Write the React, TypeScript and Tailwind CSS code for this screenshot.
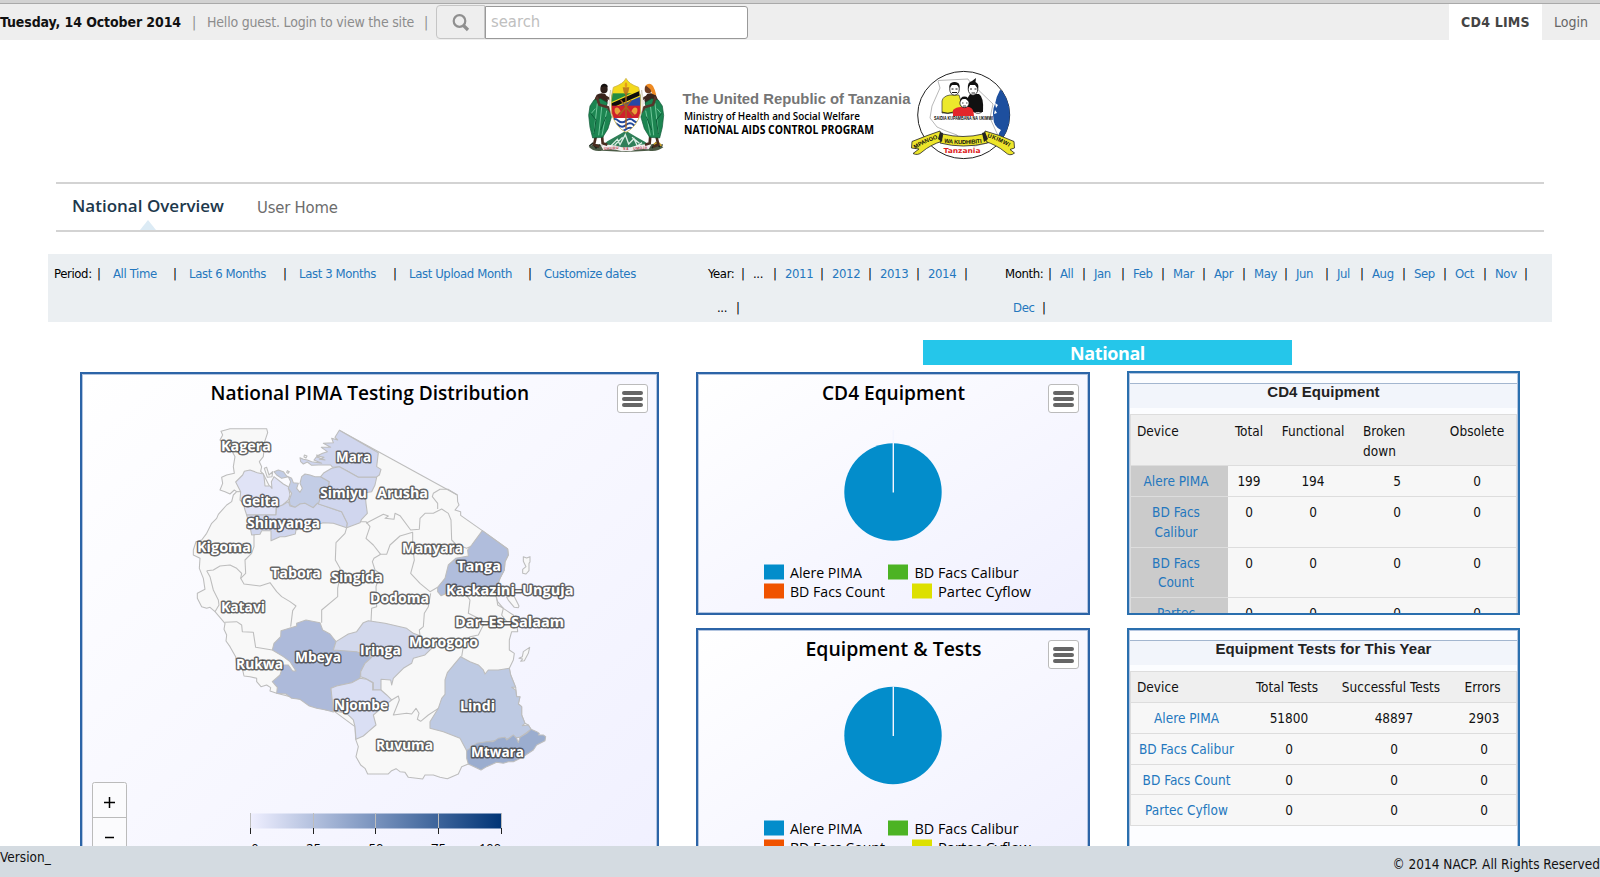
import React from 'react';

const LINK = 'text-[#2477be]';

type Label = { t: string; x: number; y: number; w: number };

const labels: Label[] = [
  { t: 'Kagera', x: 221, y: 451, w: 50 },
  { t: 'Mara', x: 336, y: 462, w: 35 },
  { t: 'Geita', x: 242, y: 506, w: 37 },
  { t: 'Simiyu', x: 320, y: 498, w: 47 },
  { t: 'Arusha', x: 377, y: 498, w: 51 },
  { t: 'Shinyanga', x: 247, y: 528, w: 73 },
  { t: 'Kigoma', x: 197, y: 552, w: 54 },
  { t: 'Tabora', x: 271, y: 578, w: 50 },
  { t: 'Singida', x: 331, y: 582, w: 52 },
  { t: 'Katavi', x: 221, y: 612, w: 44 },
  { t: 'Manyara', x: 402, y: 553, w: 61 },
  { t: 'Tanga', x: 457, y: 571, w: 44 },
  { t: 'Kaskazini–Unguja', x: 446, y: 594.5, w: 127.5 },
  { t: 'Dodoma', x: 370, y: 603, w: 59 },
  { t: 'Dar–Es–Salaam', x: 455, y: 627, w: 109 },
  { t: 'Morogoro', x: 409, y: 647, w: 69 },
  { t: 'Iringa', x: 360, y: 655, w: 41 },
  { t: 'Mbeya', x: 295, y: 662, w: 46 },
  { t: 'Rukwa', x: 236, y: 669, w: 47 },
  { t: 'Njombe', x: 334, y: 710, w: 54 },
  { t: 'Lindi', x: 460, y: 711, w: 35 },
  { t: 'Ruvuma', x: 376, y: 750, w: 57 },
  { t: 'Mtwara', x: 471, y: 757, w: 53 },
];

const country =
  'M453 214L480 206H590L593 218L584 245L580 290L568 305L575 320L572 334L580 342L600 382L640 372L665 400L750 400L752 350L785 325L808 300V211L1162 405L1163 425L1167 435L1155 450L1172 455V466L1237 512L1313 567L1315 585L1305 605L1303 630L1290 655L1280 680L1278 710L1283 725L1300 745L1310 752L1330 765L1342 805L1343 815H1325L1318 840V870L1333 880L1330 900L1318 925L1322 945L1337 982L1340 1010L1350 1010L1345 1032L1355 1040V1065L1365 1090L1375 1095L1383 1108L1195 1212L1175 1220L1165 1242L1132 1256L1110 1252L1090 1245H1065L1058 1257L1015 1252L1005 1237L990 1235L978 1226L965 1232L955 1242H893L885 1225L872 1215L858 1190L865 1160L857 1138L855 1100L790 1052L768 1050L690 1018L620 1000L600 993L602 983L590 975L573 980L560 965V955L540 950L522 948L518 930L500 915L497 890L480 860L468 843L470 825L462 808L465 790L435 755L420 742L410 745L395 740L382 715V700L405 688L400 655L388 625L390 595L370 585V570L378 545L395 540L410 520L425 490L440 475L445 463L470 435L485 425L490 405L500 395L493 390L480 402L465 395L450 390L458 370L455 352L470 345L493 340L490 320L495 290L480 262L465 250L450 240L458 225Z';

const regions: { d: string; f: string }[] = [
  { f: '#e0e3f6', d: 'M497 366L518 345L523 334L540 330L562 338L580 342L582 350L585 378H600L606 385L604 365L612 350L640 372L655 380L660 405L655 420L638 435L618 445V465H530L525 450L520 430L510 420L512 395Z' },
  { f: '#c3cde6', d: 'M612 335L620 345L635 355L655 350L662 365L655 385L665 400L658 420L660 435L675 442L690 432L705 430L715 438L730 443L742 430L752 433L750 410L775 385L778 365L752 350H735L720 345L705 342L695 350L690 370L697 385L690 397L680 385L685 370L670 368L665 355L650 348L640 335L625 330Z' },
  { f: '#d0d6ee', d: 'M530 465H618L620 442L638 435L655 425L660 438L675 442L690 432L705 430L730 443L742 430L775 442L815 455L832 490L830 503L790 490L760 488L720 500L678 510L676 522L645 530L630 530L603 542V512H575L570 523L545 525L540 500Z' },
  { f: '#d0d6ee', d: 'M808 211L925 278L920 320L933 328L928 345L918 352H865L830 332L808 320L788 322L782 315H745L725 316L712 306L700 312L692 305L690 293L700 298L712 300L725 305L755 310L732 300L740 290L765 300L748 298L762 292L742 287L758 280L772 275L754 262L782 262L760 250L790 248L785 235L803 240L795 232Z' },
  { f: '#d0d6ee', d: 'M752 350L762 338L785 325L808 320L830 332L865 352H920L915 375L905 395L885 398L888 430L892 460L875 478L870 488L830 503L832 490L815 455L775 442L745 432L752 410L775 385L778 365Z' },
  { f: '#b0bddc', d: 'M1237 512L1313 567L1315 585L1305 605L1303 630L1290 655L1278 690L1200 700H1130L1113 707L1103 695L1103 682L1125 655L1135 615L1157 595L1195 588L1193 570L1205 555Z' },
  { f: '#adbada', d: 'M607 870L612 850L632 830L633 812L680 798L680 790L708 780L750 788L758 810L780 822L798 845L790 870H860L905 892L885 910L872 935L870 955L845 968L800 978L783 985L785 1005L790 1030V1056L768 1050L740 1045L718 1038L690 1018L665 1015L648 1002L620 1000L622 982L607 965L630 945L640 915H655L668 933H678L660 905L640 890Z' },
  { f: '#d2d8ec', d: 'M798 845L835 822L860 815L880 788L895 782L945 790L1010 805L1030 820L1050 827L1085 865L1065 885L1030 895L1025 910L1000 925L970 955L965 975L962 960L933 958V990H910V968L885 955L872 950V935L885 910L905 892L860 875L790 870Z' },
  { f: '#dadff4', d: 'M783 985L800 978L845 968L870 955L890 958L908 968V990H933L950 1005L965 1020L940 1040L910 1065L918 1095L895 1115L880 1128L858 1138L855 1100L850 1080L830 1060L790 1052L785 1005Z' },
  { f: '#becae3', d: 'M1172 890L1200 905L1225 915L1240 930L1245 942L1255 930H1285L1318 925L1322 945L1337 982H1325L1337 990L1340 1010H1350L1345 1032L1355 1040V1065L1365 1090L1357 1097L1375 1095L1383 1108L1350 1132L1250 1145L1190 1172L1170 1135L1120 1115L1080 1105V1085L1105 1045L1115 1015L1125 1003V960L1132 938L1155 910Z' },
  { f: '#9badcf', d: 'M1383 1108L1400 1115L1408 1120L1405 1125H1420L1427 1130L1425 1142L1400 1155L1390 1170L1360 1190L1330 1205H1315L1300 1210L1280 1207L1250 1220L1233 1230L1195 1212L1190 1195V1172L1220 1150L1250 1145H1270L1285 1135L1305 1132L1310 1140L1330 1125L1340 1135L1345 1148L1350 1132L1370 1120Z' },
];

const borders = [
  'M512 395L500 395',
  'M552 525V560L545 580L525 600L527 640L512 655L522 672L570 678L600 668L620 695L635 710L660 725L678 738L668 752L662 800',
  'M410 632L430 630L450 618L480 615L500 625L515 640L512 655M410 632L420 650L430 690L445 720L447 735L435 755',
  'M465 787L500 785L515 795L517 815L550 817L557 862L607 870',
  'M830 503L825 520L798 548L796 600L810 625L808 660L803 685V710L755 750V788',
  'M870 485H888L900 500L888 535L910 555L932 583H950L960 555L990 528L1028 517L1028 560L1033 600L1022 640L1050 670L1080 695L1103 682',
  'M932 583L912 595L907 605L915 630L930 640L918 680L920 740L905 745L903 785',
  'M888 490L940 463L955 468L945 475L972 478L975 460L990 467L1022 510L1048 508L1050 475L1065 460L1090 460L1115 447L1135 460L1143 480L1145 540L1158 553L1190 565L1200 560',
  'M1103 447V430L1087 410L1090 400L1110 388H1135L1162 405',
  'M1082 700L1075 740L1063 760L1060 800L1048 810L1050 827',
  'M1185 700L1200 720L1195 760L1225 775L1240 795L1225 825L1200 830L1180 860L1175 890',
  'M1278 700L1283 735L1300 745L1295 765L1310 785L1330 800',
  'M965 1020L985 1008L988 1020L970 1065L1010 1060L1025 1062L1038 1045L1047 1060L1042 1078L1052 1084L1075 1065L1105 1045',
];

const islands = [
  'M1360 590L1370 594L1380 590V606L1377 610V632L1368 642L1358 640V628L1368 620L1360 604Z',
  'M1310 712L1325 706L1332 708L1347 738L1345 743L1333 742L1316 722Z',
  'M1347 895L1357 890L1360 875L1379 862L1375 880L1363 902L1352 904L1358 897Z',
  'M583 325L590 322L597 345L608 335L606 350L592 352Z',
  'M703 285L711 288L708 294L702 291Z',
  'M652 332L658 335L654 340L650 337Z',
  'M740 285L748 288L744 293Z',
];

function Fitted({ x, y, w, children, size, weight = 400, font = 'Open Sans', fill = '#000' }: {
  x: number; y: number; w: number; children: string; size: number; weight?: number; font?: string; fill?: string;
}) {
  return (
    <text x={x} y={y} textLength={w} lengthAdjust="spacingAndGlyphs" fontFamily={`"${font}", sans-serif`} fontSize={size} fontWeight={weight} fill={fill}>
      {children}
    </text>
  );
}

function MenuButton() {
  return (
    <button className="flex h-[29px] w-[31px] flex-col items-center justify-center gap-[2px] rounded-[3px] border border-[#bbb] bg-white">
      <i className="h-[4px] w-[21px] rounded-full bg-[#666]" />
      <i className="h-[4px] w-[21px] rounded-full bg-[#666]" />
      <i className="h-[4px] w-[21px] rounded-full bg-[#666]" />
    </button>
  );
}

function MapPanel() {
  return (
    <section className="relative h-[520px] w-[579px] shrink-0 border-2 border-[#2c64a7] bg-gradient-to-br from-white to-[#f0f0ff] shadow-[inset_0_0_0_1px_#b3c5e0]">
      <svg width="575" height="516" viewBox="82 374 575 516" className="block">
        <defs>
          <linearGradient id="scale">
            <stop offset="0" stopColor="#efefff" />
            <stop offset="0.5" stopColor="#7892bd" />
            <stop offset="1" stopColor="#003476" />
          </linearGradient>
        </defs>
        <Fitted x={210.5} y={400} w={318.5} size={19.5} weight={650}>National PIMA Testing Distribution</Fitted>
        <g transform="translate(70 360) scale(.33333)" stroke="#bdbdbd" strokeWidth="3.2" strokeLinejoin="round">
          <path d={country} fill="#f8f8f8" />
          <path d="M583 322L606 385L640 374L665 402L750 400L752 350L785 325L808 320V203L762 225L680 290L600 310L577 330Z" fill="#fbfbff" stroke="none" />
          {borders.map((d) => <path key={d} d={d} fill="none" />)}
          {regions.map((r) => <path key={r.d} d={r.d} fill={r.f} />)}
          {islands.map((d) => <path key={d} d={d} fill="#f8f8f8" />)}
        </g>
        {labels.map((l) => (
          <text key={l.t} x={l.x} y={l.y} textLength={l.w} lengthAdjust="spacingAndGlyphs" fontFamily='"Open Sans", sans-serif' fontSize="14.5" fontWeight="700" fill="#fff" stroke="#3f3f3f" strokeOpacity="0.8" strokeWidth="3" strokeLinejoin="round" paintOrder="stroke">
            {l.t}
          </text>
        ))}
        <rect x="250.5" y="813.5" width="251" height="15" fill="url(#scale)" />
        {[250.5, 313.5, 375.5, 438.5, 501.5].map((x) => (
          <g key={x}>
            <path d={`M${x} 813V828`} stroke="#bdbdbd" />
            <path d={`M${x} 828V834`} stroke="#222" />
          </g>
        ))}
        {[['0', 251.5, 7], ['25', 306, 15], ['50', 368.5, 15], ['75', 431, 15], ['100', 479, 22]].map(([t, x, w]) => (
          <Fitted key={t} x={+x} y={853} w={+w} size={13}>{`${t}`}</Fitted>
        ))}
        <rect x="92.5" y="782.5" width="34" height="70" rx="2" fill="#fbfbfd" stroke="#bbb" />
        <path d="M92 817.5H127" stroke="#bbb" />
        <path d="M104 802.5H115M109.5 797V808M105 837.5H114" stroke="#000" strokeWidth="1.5" />
      </svg>
      <div className="absolute right-[9.5px] top-[10px]"><MenuButton /></div>
    </section>
  );
}

function PiePanel({ title, x, w, cy, tick }: { title: string; x: number; w: number; cy: number; tick?: boolean }) {
  return (
    <section className="relative h-[243px] w-[394px] shrink-0 border-2 border-[#2c64a7] bg-gradient-to-br from-white to-[#f0f0ff] shadow-[inset_0_0_0_1px_#b3c5e0]">
      <svg width="390" height="239" viewBox="698 374 390 239" className="block">
        <Fitted x={x} y={400} w={w} size={19.5} weight={650}>{title}</Fitted>
        <circle cx="893" cy={cy} r="48.7" fill="#038dcb" />
        <path d={`M893.3 ${cy - (tick ? 62 : 49)}V${cy + 0.5}`} stroke="#f4f6ff" strokeWidth="1.4" />
        <rect x="764" y="564.5" width="20" height="15" fill="#038dcb" />
        <rect x="888" y="564.5" width="20" height="15" fill="#4cb324" />
        <rect x="764" y="583.5" width="20" height="15" fill="#f05300" />
        <rect x="912" y="583.5" width="20" height="15" fill="#dde000" />
        <Fitted x={790} y={578} w={72} size={15}>Alere PIMA</Fitted>
        <Fitted x={914.5} y={578} w={104} size={15}>BD Facs Calibur</Fitted>
        <Fitted x={790} y={597} w={95} size={15}>BD Facs Count</Fitted>
        <Fitted x={938} y={597} w={93} size={15}>Partec Cyflow</Fitted>
      </svg>
      <div className="absolute right-[9.5px] top-[10px]"><MenuButton /></div>
    </section>
  );
}

function TablePanel({ title, children }: { title: string; children: React.ReactNode }) {
  return (
    <section className="h-[244px] w-[393px] shrink-0 overflow-hidden border-2 border-[#2a6fae] bg-[#fcfdff] px-px shadow-[inset_0_0_0_1px_#b3c5e0]">
      <h2 className="mt-[10px] h-[25px] whitespace-nowrap border-t border-[#a3b6cf] bg-[#f2f5fb] text-center font-['Liberation_Sans'] text-[15px] font-bold leading-[16px] tracking-[0.05px] text-[#222]">{title}</h2>
      <div className="mt-[6px] border border-[#ddd] bg-[#f7f7f7] text-[13.5px] leading-[19.5px] tracking-[0.02px]">{children}</div>
    </section>
  );
}

const equipment: [string, string, string, string, string][] = [
  ['Alere PIMA', '199', '194', '5', '0'],
  ['BD Facs Calibur', '0', '0', '0', '0'],
  ['BD Facs Count', '0', '0', '0', '0'],
  ['Partec Cyflow', '0', '0', '0', '0'],
];

const tests: [string, string, string, string][] = [
  ['Alere PIMA', '51800', '48897', '2903'],
  ['BD Facs Calibur', '0', '0', '0'],
  ['BD Facs Count', '0', '0', '0'],
  ['Partec Cyflow', '0', '0', '0'],
];

type Slot = [string, string, boolean?];

function Slots({ items }: { items: Slot[] }) {
  return (
    <div className="flex h-[34px] items-center whitespace-nowrap">
      {items.map(([t, w, plain], i) => (
        <span key={i} className={`shrink-0 ${w} ${plain ? 'text-black' : LINK}`}>{t}</span>
      ))}
    </div>
  );
}

const period: Slot[] = [
  ['Period:', 'w-[43px]', true], ['|', 'w-[16px]', true], ['All Time', 'w-[60px]'], ['|', 'w-[16px]', true],
  ['Last 6 Months', 'w-[94px]'], ['|', 'w-[16px]', true], ['Last 3 Months', 'w-[94px]'], ['|', 'w-[16px]', true],
  ['Last Upload Month', 'w-[119px]'], ['|', 'w-[16px]', true], ['Customize dates', 'w-[92px]'],
];
const years: Slot[] = [
  ['Year:', 'w-[33px]', true], ['|', 'w-[12px]', true], ['...', 'w-[20px]', true], ['|', 'w-[12px]', true],
  ['2011', 'w-[35px]'], ['|', 'w-[12px]', true], ['2012', 'w-[36px]'], ['|', 'w-[12px]', true],
  ['2013', 'w-[36px]'], ['|', 'w-[12px]', true], ['2014', 'w-[36px]'], ['|', 'w-[5px]', true],
];
const months: Slot[] = [
  ['Month:', 'w-[43px]', true], ['|', 'w-[12px]', true], ['All', 'w-[22px]'], ['|', 'w-[12px]', true],
  ['Jan', 'w-[27px]'], ['|', 'w-[12px]', true], ['Feb', 'w-[28px]'], ['|', 'w-[12px]', true],
  ['Mar', 'w-[29px]'], ['|', 'w-[12px]', true], ['Apr', 'w-[28px]'], ['|', 'w-[12px]', true],
  ['May', 'w-[30px]'], ['|', 'w-[12px]', true], ['Jun', 'w-[29px]'], ['|', 'w-[12px]', true],
  ['Jul', 'w-[23px]'], ['|', 'w-[12px]', true], ['Aug', 'w-[30px]'], ['|', 'w-[12px]', true],
  ['Sep', 'w-[29px]'], ['|', 'w-[12px]', true], ['Oct', 'w-[28px]'], ['|', 'w-[12px]', true],
  ['Nov', 'w-[29px]'], ['|', 'w-[5px]', true],
];

function Supporter({ scarf }: { scarf?: boolean }) {
  return (
    <g>
      <path d="M78 258L72 284L88 290M96 256L98 280L112 284" fill="none" stroke="#4a2d20" strokeWidth="8" />
      <path d="M80 134Q92 126 106 132L114 150L108 172L78 170L70 156Z" fill="#3a241c" />
      <path d="M72 150L92 146L112 158L108 174L124 184V202L114 236L98 262L68 264L60 232L56 196L60 168Z" fill="#1c8551" stroke="#0e5635" strokeWidth="2" />
      <path d="M82 160L72 250M96 164L86 256M110 182L96 256M64 190L76 176" fill="none" stroke="#6fc79a" strokeWidth="3" />
      <path d="M62 190L78 210L72 252M108 200L92 240" fill="none" stroke="#0d5b38" strokeWidth="3" />
      <path d="M80 140L88 164L114 172L124 188" fill="none" stroke="#54352a" strokeWidth="8" strokeLinejoin="round" />
      <path d="M104 138L124 150" stroke="#3f271d" strokeWidth="7" />
      <ellipse cx="102" cy="117" rx="11" ry="13" fill={scarf ? '#6b3b20' : '#2f201b'} />
      {scarf ? (
        <path d="M110 106Q98 96 88 108Q82 118 78 136L90 132L96 118Z" fill="#ee8a22" />
      ) : (
        <path d="M92 112Q94 100 104 101Q114 103 113 112L104 109Z" fill="#15100f" />
      )}
      <path d="M122 120Q112 160 124 196Q128 206 136 212Q122 180 126 150Z" fill="#faf6ea" stroke="#b9b1a0" strokeWidth="1.5" />
    </g>
  );
}

function CoatOfArms() {
  const shield = 'M168 85Q176 102 206 112Q216 150 211 190Q200 232 168 247Q136 232 125 190Q120 150 130 112Q160 102 168 85Z';
  return (
    <g transform="translate(570 50) scale(.33333)">
      <path d="M84 298L112 274L140 258L168 242L198 260L226 276L252 298Z" fill="#2f7f58" />
      <path d="M120 290L142 268L150 284L166 254L176 282L192 266L202 288L216 278M134 286L158 262M186 262L208 280" fill="none" stroke="#d6ece0" strokeWidth="4" />
      <path d="M56 290Q76 276 96 286L128 292Q168 302 208 292L240 284Q264 276 280 292Q262 306 236 302L168 306L96 302Q70 306 56 290Z" fill="#4b5b46" />
      <path d="M58 288L68 280L78 294L90 284M246 294L258 278L268 290L278 284" fill="none" stroke="#1a241c" strokeWidth="4" />
      <path d="M252 284Q264 270 274 288" fill="none" stroke="#cfa42a" strokeWidth="5" />
      <path d="M92 286Q128 280 156 292H182Q210 280 244 284L236 298Q208 294 182 304H156Q126 294 100 300Z" fill="#f3eeee" />
      <text x="102" y="298" fontSize="11" textLength="44" transform="rotate(-4 124 298)" fill="#b2354a" fontFamily="Liberation Sans" fontWeight="700">UHURU</text>
      <text x="160" y="301" fontSize="9" textLength="15" fill="#b2354a" fontFamily="Liberation Sans" fontWeight="700">NA</text>
      <text x="190" y="298" fontSize="11" textLength="42" transform="rotate(-4 210 298)" fill="#b2354a" fontFamily="Liberation Sans" fontWeight="700">UMOJA</text>
      <Supporter />
      <g transform="translate(337 0) scale(-1 1)"><Supporter scarf /></g>
      <clipPath id="shield"><path d={shield} /></clipPath>
      <g clipPath="url(#shield)">
        <rect x="118" y="80" width="100" height="56" fill="#f3d91c" />
        <rect x="118" y="130" width="100" height="38" fill="#238b43" />
        <path d="M218 126V168H122Z" fill="#2747a6" />
        <path d="M118 170L218 126" stroke="#f3d91c" strokeWidth="20" />
        <path d="M118 170L218 126" stroke="#0d0d0d" strokeWidth="13" />
        <rect x="118" y="167" width="100" height="37" fill="#cf1f2b" />
        <rect x="118" y="204" width="100" height="46" fill="#fff" />
        <path d="M122 212q12-10 23 0t23 0t23 0t23 0M122 225q12-10 23 0t23 0t23 0t23 0M122 238q12-10 23 0t23 0t23 0t23 0" fill="none" stroke="#23499c" strokeWidth="6" />
      </g>
      <path d="M158 112H178L175 126L170 134H166L161 126Z" fill="#c2801f" />
      <path d="M168 96Q176 106 168 113Q160 106 168 96Z" fill="#e59a1c" />
      <path d="M168 128V236M146 198L184 150M190 198L152 150" stroke="#a5621d" strokeWidth="4" />
      <path d="M134 176Q144 166 152 184L142 194Q132 190 134 176ZM202 176Q192 166 184 184L194 194Q204 190 202 176Z" fill="#e8a13a" />
      <path d={shield} fill="none" stroke="#cdb552" strokeWidth="2.5" />
    </g>
  );
}

function Emblem() {
  return (
    <g>
      <clipPath id="disc"><ellipse cx="963.7" cy="115" rx="46" ry="43.6" /></clipPath>
      <ellipse cx="963.7" cy="115" rx="46" ry="43.6" fill="#fff" stroke="#222" strokeWidth="1" />
      <path d="M1000 90L1012 92V142H1000Q996 136 1001 130Q993 126 993.500 118Q992 110 995 104Q996 97 1000 90Z" fill="#1d4f9e" clipPath="url(#disc)" />
      <path d="M995 103l3 2l-2 3zM995 110l2 3l-3 1z" fill="#fff" />
      <path d="M938 81L940 88L936 97L932 106L930 118L937 127L946 131L957 135L962 144L975 146L1000 140L990 118L993 104L970 82L968 79L938 80.5" fill="none" stroke="#999" strokeWidth=".7" />
      <path d="M942 113V101Q943 96 950 95H959L962 105L959 113Z" fill="#ece92c" stroke="#333" strokeWidth=".7" />
      <path d="M964 112L967 99L970 94H979Q984 97 983 112Z" fill="#111" />
      <ellipse cx="954.5" cy="89" rx="4.8" ry="6.2" fill="#fff" stroke="#111" strokeWidth=".8" />
      <path d="M949.500 88Q948.500 82 954.5 82Q960.500 82 959.500 88L957 85H952Z" fill="#111" />
      <path d="M951.500 89H953.500M955.500 89H957.500M952 92.500H957" stroke="#111" strokeWidth="1" />
      <ellipse cx="973" cy="89" rx="4.8" ry="6.2" fill="#fff" stroke="#111" strokeWidth=".8" />
      <path d="M968 89Q967 82 972 81L976 78L975.500 82Q979.500 84 978 89L975 85H970Z" fill="#111" />
      <path d="M970 89H972M974.500 89H976.500M971.500 93H975" stroke="#111" strokeWidth=".9" />
      <path d="M953 116V110Q956 107 961 107H969Q974 108 974 116Z" fill="#e3262b" />
      <circle cx="964.500" cy="103" r="4.6" fill="#fff" stroke="#111" strokeWidth=".8" />
      <path d="M960 102Q960 96.500 964.500 96.500Q969 96.500 969 102L966 99H962Z" fill="#111" />
      <path d="M962 103H963.500M966 103H967.500M963 106H966" stroke="#111" strokeWidth=".8" />
      <path d="M942 112Q948 115 953 112M974 112Q979 115 983 111" fill="none" stroke="#111" strokeWidth=".8" />
      <Fitted x={934} y={120} w={59} size={4.6} weight={700} font="Liberation Sans">SAIDIA KUPAMBANA NA UKIMWI</Fitted>
      <g fill="#ede52b" stroke="#222" strokeWidth=".8">
        <path d="M912 141.500Q928 135 940 131L942.500 141Q930 145 922 152Q918 156 913 153.500L919 149L911.500 148Z" />
        <path d="M1014 141.500Q1000 135 985 131L984 141Q997 145 1005 152Q1010 157 1014.500 153L1010 149.500L1014.500 148Z" />
        <path d="M943 134Q963 139 983 134L987.500 143Q963 149 940 143Z" />
      </g>
      <path d="M940 132L943 133L942 142L938 139ZM985 132L982 133L984 142L988 139Z" fill="#222" />
      <path id="ribbonL" d="M915 149Q928 141 940 138" fill="none" />
      <path id="ribbonR" d="M987 137Q1001 142 1012 148.500" fill="none" />
      <path id="ribbonC" d="M944 142.500Q963 145.500 984 142.500" fill="none" />
      <g fontFamily="Liberation Sans" fontWeight="700" fontSize="5.8" fill="#111">
        <text><textPath href="#ribbonL" textLength="25">MPANGO</textPath></text>
        <text><textPath href="#ribbonR" textLength="24">UKIMWI</textPath></text>
        <text><textPath href="#ribbonC" textLength="38">WA KUDHIBITI</textPath></text>
      </g>
      <Fitted x={943.5} y={153} w={37} size={6.8} weight={700} font="DejaVu Sans" fill="#dd1c24">Tanzania</Fitted>
    </g>
  );
}

export default function App() {
  return (
    <div className="flex h-[877px] w-[1600px] flex-col overflow-hidden bg-white font-['DejaVu_Sans_Condensed','DejaVu_Sans',sans-serif] text-[#111]">
      <div className="h-[4px] shrink-0 border-b border-[#a9a9a9] bg-[#d2d2d2]" />
      <header className="flex h-[36px] shrink-0 items-center whitespace-nowrap bg-[#eeeeee] text-[14px] text-[#8c8c8c]">
        <b className="w-[192px] pt-px text-[14px] tracking-[-0.1px] text-[#111]">Tuesday, 14 October 2014</b>
        <span className="w-[15px] pt-px">|</span>
        <span className="w-[217px] pt-px tracking-[-0.2px]">Hello guest. Login to view the site</span>
        <span className="w-[12px] pt-px">|</span>
        <div className="flex h-[34px] w-[49px] items-center justify-center rounded-l-[4px] border border-[#c5c5c5]">
          <svg width="20" height="20" viewBox="0 0 20 20" fill="none" stroke="#8f8f8f"><circle cx="8.500" cy="9" r="5.800" strokeWidth="2.2" /><path d="M12.500 13.500L17 18" strokeWidth="3.200" /></svg>
        </div>
        <div className="flex h-[33px] w-[263px] items-center rounded-r-[3px] border border-[#999] bg-white pl-[5px] pt-px text-[16.5px] tracking-[0px] text-[#c0c0c0]">search</div>
        <b className="ml-auto flex h-full w-[93px] items-center justify-center bg-white pt-px text-[14px] tracking-[0.2px] text-[#444]">CD4 LIMS</b>
        <span className="w-[58px] pl-[12px] pt-px tracking-[0px] text-[#666]">Login</span>
      </header>

      <div className="flex h-[142px] shrink-0 justify-center">
        <svg width="460" height="130" viewBox="570 50 460 130" className="mt-[10px]">
          <CoatOfArms />
          <Fitted x={682.5} y={104} w={228} size={15} weight={700} font="Liberation Sans" fill="#757575">The United Republic of Tanzania</Fitted>
          <Fitted x={684} y={119.5} w={176} size={11.5} weight={600}>Ministry of Health and Social Welfare</Fitted>
          <Fitted x={684} y={134} w={190} size={11.8} weight={700}>NATIONAL AIDS CONTROL PROGRAM</Fitted>
          <Emblem />
        </svg>
      </div>

      <nav className="mx-[56px] flex h-[50px] shrink-0 whitespace-nowrap border-y-2 border-[#d3d3d3] pl-[18px]">
        <div className="flex w-[148px] flex-col items-center">
          <b className="mt-[10px] text-[17px] leading-[24px] font-semibold tracking-[0px] text-[#1d384c] font-['Open_Sans']">National Overview</b>
          <i className="mt-auto border-x-[8px] border-b-[10px] border-x-transparent border-b-[#dcebf5]" />
        </div>
        <span className="ml-[35px] mt-[12px] text-[16.5px] leading-[24px] tracking-[-0.2px] text-[#6c6c6c]">User Home</span>
      </nav>

      <div className="mx-[48px] mt-[22px] flex h-[68px] shrink-0 bg-[#ebeff2] pl-[6px] pt-[3px] text-[13px] tracking-[-0.38px]">
        <div className="w-[654px]"><Slots items={period} /></div>
        <div className="w-[297px]">
          <Slots items={years} />
          <div className="pl-[9px]"><Slots items={[['...', 'w-[19px]', true], ['|', 'w-[5px]', true]]} /></div>
        </div>
        <div>
          <Slots items={months} />
          <div className="pl-[8px]"><Slots items={[['Dec', 'w-[29px]'], ['|', 'w-[5px]', true]]} /></div>
        </div>
      </div>

      <main className="min-h-0 flex-1 overflow-hidden">
        <h1 className="ml-[923px] mt-[18px] h-[25px] w-[369px] bg-[#25c6ea] text-center font-['Open_Sans'] text-[18px] font-bold leading-[27px] tracking-[-0.4px] text-white">National</h1>
        <div className="mt-[7px] flex pl-[80px]">
          <MapPanel />
          <div className="ml-[37px] flex flex-col gap-[13px]">
            <PiePanel title="CD4 Equipment" x={822} w={143} cy={492} tick />
            <PiePanel title="Equipment &amp; Tests" x={805.5} w={176} cy={479.5} />
          </div>
          <div className="-mt-px ml-[37px] flex flex-col gap-[13px]">
            <TablePanel title="CD4 Equipment">
              <div className="grid h-[50px] grid-cols-[97px_42px_86px_82px_1fr] bg-[#efefef] pt-[7px]">
                <span className="pl-[6px]">Device</span>
                <span className="text-center">Total</span>
                <span className="text-center">Functional</span>
                <span className="pl-[7px] pr-[20px]">Broken down</span>
                <span className="text-center">Obsolete</span>
              </div>
              {equipment.map((r, i) => (
                <div key={r[0]} className={`grid grid-cols-[97px_42px_86px_82px_1fr] border-t border-[#ddd] text-center ${i === 0 ? 'h-[31px]' : 'h-[50.500px]'}`}>
                  <span className={`bg-[#cbcbcb] pt-[6px] ${i === 0 ? 'whitespace-nowrap pr-[7px]' : 'pl-[15px] pr-[22px]'} ${LINK}`}>{r[0]}</span>
                  {r.slice(1).map((c, j) => <span key={j} className="pt-[6px]">{c}</span>)}
                </div>
              ))}
            </TablePanel>
            <TablePanel title="Equipment Tests for This Year">
              <div className="grid h-[30px] grid-cols-[111px_94px_116px_1fr] whitespace-nowrap bg-[#efefef] pt-[6px] text-center">
                <span className="pl-[6px] text-left">Device</span>
                <span className="pr-[4px]">Total Tests</span>
                <span className="pr-[6px]">Successful Tests</span>
                <span className="pr-[3px]">Errors</span>
              </div>
              {tests.map((r) => (
                <div key={r[0]} className="grid h-[30.800px] grid-cols-[111px_94px_116px_1fr] whitespace-nowrap border-t border-[#ddd] pt-[6px] text-center">
                  {r.map((c, j) => <span key={j} className={j === 0 ? LINK : ''}>{c}</span>)}
                </div>
              ))}
            </TablePanel>
          </div>
        </div>
      </main>

      <footer className="flex h-[31px] shrink-0 justify-between bg-[#d4dbe1] text-[13.5px] tracking-[0.02px]">
        <span className="leading-[22px]">Version_</span>
        <span className="pt-[8px] leading-[20px]">© 2014 NACP. All Rights Reserved</span>
      </footer>
    </div>
  );
}
